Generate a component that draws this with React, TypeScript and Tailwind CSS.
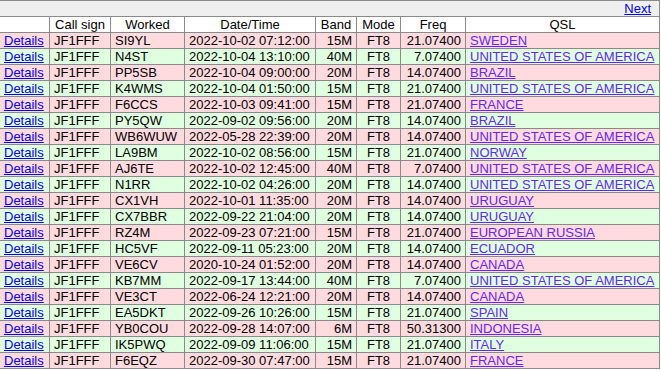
import React from "react";

const rows: [string, string, string, string, string, string][] = [
  ["SI9YL", "2022-10-02 07:12:00", "15M", "FT8", "21.07400", "SWEDEN"],
  ["N4ST", "2022-10-04 13:10:00", "40M", "FT8", "7.07400", "UNITED STATES OF AMERICA"],
  ["PP5SB", "2022-10-04 09:00:00", "20M", "FT8", "14.07400", "BRAZIL"],
  ["K4WMS", "2022-10-04 01:50:00", "15M", "FT8", "21.07400", "UNITED STATES OF AMERICA"],
  ["F6CCS", "2022-10-03 09:41:00", "15M", "FT8", "21.07400", "FRANCE"],
  ["PY5QW", "2022-09-02 09:56:00", "20M", "FT8", "14.07400", "BRAZIL"],
  ["WB6WUW", "2022-05-28 22:39:00", "20M", "FT8", "14.07400", "UNITED STATES OF AMERICA"],
  ["LA9BM", "2022-10-02 08:56:00", "15M", "FT8", "21.07400", "NORWAY"],
  ["AJ6TE", "2022-10-02 12:45:00", "40M", "FT8", "7.07400", "UNITED STATES OF AMERICA"],
  ["N1RR", "2022-10-02 04:26:00", "20M", "FT8", "14.07400", "UNITED STATES OF AMERICA"],
  ["CX1VH", "2022-10-01 11:35:00", "20M", "FT8", "14.07400", "URUGUAY"],
  ["CX7BBR", "2022-09-22 21:04:00", "20M", "FT8", "14.07400", "URUGUAY"],
  ["RZ4M", "2022-09-23 07:21:00", "15M", "FT8", "21.07400", "EUROPEAN RUSSIA"],
  ["HC5VF", "2022-09-11 05:23:00", "20M", "FT8", "14.07400", "ECUADOR"],
  ["VE6CV", "2020-10-24 01:52:00", "20M", "FT8", "14.07400", "CANADA"],
  ["KB7MM", "2022-09-17 13:44:00", "40M", "FT8", "7.07400", "UNITED STATES OF AMERICA"],
  ["VE3CT", "2022-06-24 12:21:00", "20M", "FT8", "14.07400", "CANADA"],
  ["EA5DKT", "2022-09-26 10:26:00", "15M", "FT8", "21.07400", "SPAIN"],
  ["YB0COU", "2022-09-28 14:07:00", "6M", "FT8", "50.31300", "INDONESIA"],
  ["IK5PWQ", "2022-09-09 11:06:00", "15M", "FT8", "21.07400", "ITALY"],
  ["F6EQZ", "2022-09-30 07:47:00", "15M", "FT8", "21.07400", "FRANCE"],
];

const cell = "h-4 border-r border-b border-[#8a8a8a] px-1 leading-[15px] whitespace-nowrap overflow-hidden";

export default function App() {
  return (
    <div
      className="w-[661px] h-[371px] overflow-hidden bg-white text-[13px] text-black"
      style={{ fontFamily: '"Liberation Sans", Arial, sans-serif' }}
    >
      <div className="grid w-[660px] grid-cols-[50px_61px_74px_131px_41px_44px_65px_194px]">
        <div className="col-span-8 flex h-[17px] items-center justify-end border-t border-r border-b border-[#8a8a8a] bg-[#efefef] pr-2 leading-[15px]">
          <a href="#" className="text-[#0000ee] underline">Next</a>
        </div>
        <div className={`${cell} bg-white`}></div>
        <div className={`${cell} bg-white text-center`}>Call sign</div>
        <div className={`${cell} bg-white text-center`}>Worked</div>
        <div className={`${cell} bg-white text-center`}>Date/Time</div>
        <div className={`${cell} bg-white text-center`}>Band</div>
        <div className={`${cell} bg-white text-center`}>Mode</div>
        <div className={`${cell} bg-white text-center`}>Freq</div>
        <div className={`${cell} bg-white text-center`}>QSL</div>
        {rows.map((r, i) => {
          const bg = i % 2 === 0 ? "bg-[#ffdadf]" : "bg-[#e0ffe0]";
          return (
            <React.Fragment key={i}>
              <div className={`${cell} ${bg}`}>
                <a href="#" className="text-[#0000ee] underline">Details</a>
              </div>
              <div className={`${cell} ${bg}`}>JF1FFF</div>
              <div className={`${cell} ${bg}`}>{r[0]}</div>
              <div className={`${cell} ${bg}`}>{r[1]}</div>
              <div className={`${cell} ${bg} text-right`}>{r[2]}</div>
              <div className={`${cell} ${bg} text-center`}>{r[3]}</div>
              <div className={`${cell} ${bg} text-right`}>{r[4]}</div>
              <div className={`${cell} ${bg}`}>
                <a href="#" className="text-[#6428f0] underline">{r[5]}</a>
              </div>
            </React.Fragment>
          );
        })}
      </div>
    </div>
  );
}
